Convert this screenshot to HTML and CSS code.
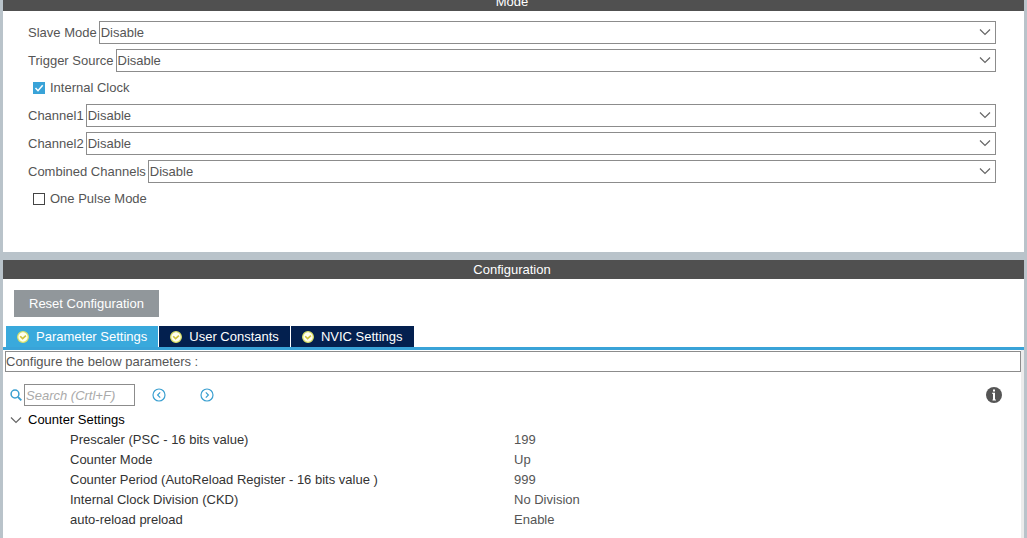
FILE: index.html
```html
<!DOCTYPE html>
<html lang="en">
<head>
<meta charset="utf-8">
<title>Timer Mode and Configuration</title>
<link rel="stylesheet" href="styles.css">
</head>
<body>
<svg class="defs" aria-hidden="true">
  <symbol id="chevron" viewBox="0 0 12 8"><path d="M1 1.5 6 6.5 11 1.5" fill="none" stroke="currentColor" stroke-width="1.2"/></symbol>
  <symbol id="ok" viewBox="0 0 12 12"><circle cx="6" cy="6" r="5.3" fill="#fffff0" stroke="#dce36a" stroke-width="1.3"/><path d="M3.2 5.2 5.6 7.6 8.9 4.6" fill="none" stroke="#cfc23c" stroke-width="1.6"/></symbol>
</svg>
<main class="page">
  <section class="panel mode">
    <h2 class="title title-cut">Mode</h2>
    <form class="fields">
      <div class="field"><label for="slave">Slave Mode</label><div class="combo"><select id="slave"><option>Disable</option></select><svg class="arrow"><use href="#chevron"/></svg></div></div>
      <div class="field"><label for="trigger">Trigger Source</label><div class="combo"><select id="trigger"><option>Disable</option></select><svg class="arrow"><use href="#chevron"/></svg></div></div>
      <div class="check"><span class="box"><input id="clock" type="checkbox" checked><svg class="tick" viewBox="0 0 12 12"><path d="M2.5 6 5 8.7 9.7 3.3" fill="none" stroke="#fff" stroke-width="1.5"/></svg></span><label for="clock">Internal Clock</label></div>
      <div class="field"><label for="ch1">Channel1</label><div class="combo"><select id="ch1"><option>Disable</option></select><svg class="arrow"><use href="#chevron"/></svg></div></div>
      <div class="field"><label for="ch2">Channel2</label><div class="combo"><select id="ch2"><option>Disable</option></select><svg class="arrow"><use href="#chevron"/></svg></div></div>
      <div class="field"><label for="combined">Combined Channels</label><div class="combo"><select id="combined"><option>Disable</option></select><svg class="arrow"><use href="#chevron"/></svg></div></div>
      <div class="check"><span class="box"><input id="pulse" type="checkbox"><svg class="tick" viewBox="0 0 12 12"><path d="M2.5 6 5 8.7 9.7 3.3" fill="none" stroke="#fff" stroke-width="1.5"/></svg></span><label for="pulse">One Pulse Mode</label></div>
    </form>
  </section>
  <section class="panel config">
    <h2 class="title">Configuration</h2>
    <button class="reset" type="button">Reset Configuration</button>
    <nav class="tabs">
      <button class="tab active" type="button"><svg class="ok"><use href="#ok"/></svg>Parameter Settings</button>
      <button class="tab" type="button"><svg class="ok"><use href="#ok"/></svg>User Constants</button>
      <button class="tab" type="button"><svg class="ok"><use href="#ok"/></svg>NVIC Settings</button>
    </nav>
    <div class="content">
      <p class="hint">Configure the below parameters :</p>
      <div class="toolbar">
        <svg class="lens" viewBox="0 0 12 12"><circle cx="5" cy="5" r="3.9" fill="none" stroke="#3a9fd0" stroke-width="1.5"/><path d="M8 8 11.3 11.3" stroke="#3a9fd0" stroke-width="1.8"/></svg>
        <input class="search" type="text" placeholder="Search (Crtl+F)" aria-label="Search">
        <button class="nav prev" type="button" aria-label="Previous"><svg viewBox="0 0 14 14"><circle cx="7" cy="7" r="6"/><path d="M8.2 4.3 5.6 7 8.2 9.7"/></svg></button>
        <button class="nav next" type="button" aria-label="Next"><svg viewBox="0 0 14 14"><circle cx="7" cy="7" r="6"/><path d="M5.8 4.3 8.4 7 5.8 9.7"/></svg></button>
        <button class="info" type="button" aria-label="Information"><svg viewBox="0 0 16 16"><circle cx="8" cy="8" r="8" fill="#555"/><path d="M7 2.5h2v2H7zM6 5.7h3v6.8h1v1H6.5v-1H7V6.8H6z" fill="#fff"/></svg></button>
      </div>
      <h3 class="group"><svg class="twist"><use href="#chevron"/></svg>Counter Settings</h3>
      <table class="params">
        <tr><th scope="row">Prescaler (PSC - 16 bits value)</th><td>199</td></tr>
        <tr><th scope="row">Counter Mode</th><td>Up</td></tr>
        <tr><th scope="row">Counter Period (AutoReload Register - 16 bits value )</th><td>999</td></tr>
        <tr><th scope="row">Internal Clock Division (CKD)</th><td>No Division</td></tr>
        <tr><th scope="row">auto-reload preload</th><td>Enable</td></tr>
      </table>
    </div>
  </section>
</main>
</body>
</html>
```
FILE: styles.css
```css
* { box-sizing: border-box; }
body {
  margin: 0;
  background: #b9c3ca;
  color: #555;
  font: 13px/18px "Liberation Sans", Arial, sans-serif;
}
button, input, select { font: inherit; color: inherit; border-radius: 0; }
button { border: 0; padding: 0; }
.defs { position: absolute; width: 0; height: 0; }
.page {
  display: flex;
  flex-direction: column;
  gap: 8px;
  min-height: 100vh;
  padding: 0 3px;
}
.panel { background: #fff; }
.title {
  display: flex;
  align-items: flex-end;
  justify-content: center;
  margin: 0;
  height: 19px;
  background: #505050;
  color: #fff;
  font-size: 13px;
  font-weight: normal;
  line-height: 19px;
  padding-right: 3px;
  overflow: hidden;
}
.title-cut { height: 11px; }

.fields {
  display: flex;
  flex-direction: column;
  gap: 5px;
  padding: 10px 28px 42px 25px;
}
.field { display: flex; align-items: center; gap: 2px; }
.combo { position: relative; flex: 1; display: flex; }
.combo select {
  appearance: none;
  width: 100%;
  height: 23px;
  margin: 0;
  padding: 0 1px;
  border: 1px solid #8c8c8c;
  background: #fff;
}
.arrow {
  position: absolute;
  right: 5px;
  top: 7px;
  width: 12px;
  height: 8px;
  color: #666;
  pointer-events: none;
}
.check {
  display: flex;
  align-items: center;
  gap: 5px;
  height: 22px;
  padding-left: 5px;
}
.box { position: relative; display: flex; }
.box input {
  appearance: none;
  width: 12px;
  height: 12px;
  margin: 0;
  border: 1px solid #444;
}
.box input:checked { background: #39a3d8; border-color: #39a3d8; }
.tick {
  position: absolute;
  inset: 0;
  width: 12px;
  height: 12px;
  visibility: hidden;
  pointer-events: none;
}
.box input:checked + .tick { visibility: visible; }

.config { flex: 1; display: flex; flex-direction: column; }
.reset {
  align-self: flex-start;
  margin: 11px 0 9px 11px;
  padding: 0 15px;
  height: 27px;
  background: #91979b;
  color: #fff;
}
.tabs {
  display: flex;
  gap: 1px;
  padding-left: 3px;
  border-bottom: 3px solid #39a3d8;
}
.tab {
  display: flex;
  align-items: center;
  gap: 7px;
  height: 21px;
  padding: 0 11px;
  background: #03204f;
  color: #fff;
}
.tab.active { background: #39a9dc; }
.ok { width: 12px; height: 12px; }

.content { flex: 1; padding: 1px 0 9px 2px; border-right: 3px solid #ececec; }
.hint {
  margin: 0;
  height: 21px;
  border: 1px solid #8c8c8c;
  line-height: 19px;
}
.toolbar { display: flex; align-items: center; padding: 12px 19px 4px 5px; }
.lens { width: 12px; height: 12px; margin-right: 2px; }
.search {
  width: 111px;
  height: 22px;
  padding: 0 1px;
  border: 1px solid #8c8c8c;
}
.search::placeholder { color: #aaa; font-style: italic; }
.nav, .info { display: flex; background: none; }
.nav svg { width: 14px; height: 14px; fill: none; stroke: #3a9fd0; stroke-width: 1.2; }
.prev { margin-left: 17px; }
.next { margin-left: 34px; }
.info { margin-left: auto; }
.info svg { width: 16px; height: 16px; }
.group {
  display: flex;
  align-items: center;
  gap: 6px;
  height: 20px;
  margin: 0;
  padding-left: 5px;
  color: #000;
  font-size: 13px;
  font-weight: normal;
}
.twist { width: 12px; height: 8px; color: #666; }
.params { width: 100%; border-collapse: collapse; table-layout: fixed; }
.params th, .params td { height: 20px; padding: 0; text-align: left; font-weight: normal; }
.params th { width: 50%; padding-left: 65px; color: #333; }
.params td { padding-left: 1px; }
```
